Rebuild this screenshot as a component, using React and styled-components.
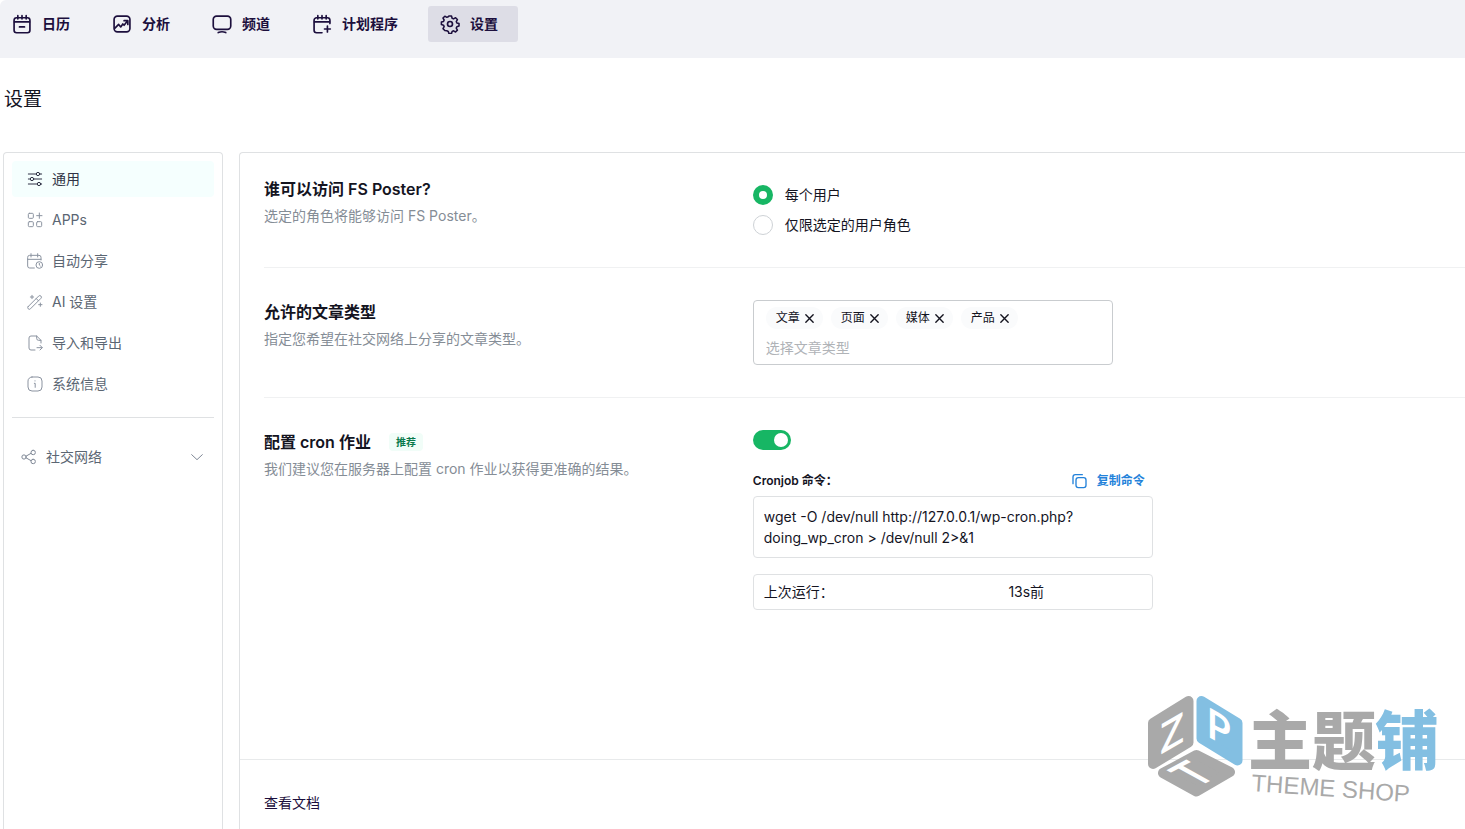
import { useState } from "react";
import styled, { createGlobalStyle, css } from "styled-components";

const navItems = [
  { name: "日历", icon: "calendar" },
  { name: "分析", icon: "chart" },
  { name: "频道", icon: "monitor" },
  { name: "计划程序", icon: "planner" },
  { name: "设置", icon: "gear" },
];

const menuItems = [
  { name: "通用", icon: "sliders" },
  { name: "APPs", icon: "apps" },
  { name: "自动分享", icon: "calendarClock" },
  { name: "AI 设置", icon: "wand" },
  { name: "导入和导出", icon: "fileExport" },
  { name: "系统信息", icon: "info" },
];

export default function App() {
  const [access, setAccess] = useState("all");
  const [types, setTypes] = useState(["文章", "页面", "媒体", "产品"]);
  const [cronActive, setCronActive] = useState(true);

  return (
    <>
      <GlobalStyle />
      <StyledPage>
        <StyledNav>
          {navItems.map(({ name, icon }) => (
            <StyledNavButton key={name} type="button" $active={name === "设置"}>
              <Icon name={icon} size={20} stroke={2} />
              {name}
            </StyledNavButton>
          ))}
        </StyledNav>
        <StyledPageTitle>设置</StyledPageTitle>
        <StyledLayout>
          <StyledSidebar>
            <StyledMenu>
              {menuItems.map(({ name, icon }) => (
                <StyledMenuLink key={name} href="#" $active={name === "通用"}>
                  <Icon name={icon} size={16} stroke={1.5} />
                  <span>{name}</span>
                </StyledMenuLink>
              ))}
            </StyledMenu>
            <StyledGroupButton type="button">
              <Icon name="share" size={16} stroke={1.5} />
              <span>社交网络</span>
              <Icon name="chevron" size={16} stroke={1.5} />
            </StyledGroupButton>
          </StyledSidebar>
          <StyledPanel>
            <StyledRows>
              <StyledRow $first>
                <div>
                  <StyledRowTitle>谁可以访问 FS Poster?</StyledRowTitle>
                  <StyledText>选定的角色将能够访问 FS Poster。</StyledText>
                </div>
                <StyledRadioGroup>
                  <StyledRadioLabel>
                    <StyledRadio
                      type="radio"
                      name="access"
                      checked={access === "all"}
                      onChange={() => setAccess("all")}
                    />
                    每个用户
                  </StyledRadioLabel>
                  <StyledRadioLabel>
                    <StyledRadio
                      type="radio"
                      name="access"
                      checked={access === "roles"}
                      onChange={() => setAccess("roles")}
                    />
                    仅限选定的用户角色
                  </StyledRadioLabel>
                </StyledRadioGroup>
              </StyledRow>
              <StyledRow>
                <div>
                  <StyledRowTitle>允许的文章类型</StyledRowTitle>
                  <StyledText>指定您希望在社交网络上分享的文章类型。</StyledText>
                </div>
                <StyledTagBox>
                  <StyledTags>
                    {types.map((type) => (
                      <StyledTag key={type}>
                        {type}
                        <StyledTagButton
                          type="button"
                          aria-label={type}
                          onClick={() =>
                            setTypes(types.filter((item) => item !== type))
                          }
                        >
                          <Icon name="close" size={11} stroke={3} />
                        </StyledTagButton>
                      </StyledTag>
                    ))}
                  </StyledTags>
                  <StyledTagInput
                    aria-label="选择文章类型"
                    placeholder="选择文章类型"
                  />
                </StyledTagBox>
              </StyledRow>
              <StyledRow>
                <div>
                  <StyledRowTitle>
                    配置 cron 作业
                    <StyledBadge>推荐</StyledBadge>
                  </StyledRowTitle>
                  <StyledText>
                    我们建议您在服务器上配置 cron 作业以获得更准确的结果。
                  </StyledText>
                </div>
                <StyledCron>
                  <StyledSwitch
                    type="checkbox"
                    role="switch"
                    aria-label="配置 cron 作业"
                    checked={cronActive}
                    onChange={() => setCronActive(!cronActive)}
                  />
                  <StyledCronHeader>
                    <StyledCronLabel>Cronjob 命令：</StyledCronLabel>
                    <StyledCopyButton type="button">
                      <Icon name="copy" size={16} stroke={2} />
                      复制命令
                    </StyledCopyButton>
                  </StyledCronHeader>
                  <StyledCommand>
                    wget -O /dev/null http://127.0.0.1/wp-cron.php?doing_wp_cron
                    &gt; /dev/null 2&gt;&amp;1
                  </StyledCommand>
                  <StyledLastRun>
                    <dt>上次运行：</dt>
                    <dd>13s前</dd>
                  </StyledLastRun>
                </StyledCron>
              </StyledRow>
            </StyledRows>
            <StyledFooter>
              <StyledFooterLink href="#">查看文档</StyledFooterLink>
            </StyledFooter>
          </StyledPanel>
        </StyledLayout>
        <ThemeShopLogo />
      </StyledPage>
    </>
  );
}

const icons = {
  calendar: (
    <>
      <rect x="2.500" y="4.500" width="19" height="18" rx="3" />
      <path d="M3 9.500h18M7 2v4M12 2v4M17 2v4M9 15.500h6" />
    </>
  ),
  chart: (
    <>
      <rect x="2.500" y="2.500" width="19" height="19" rx="4" />
      <path d="M3.500 17l4.500-4.500 2.500 3 2.500-3.500 1.500 1.500 4-5M14.500 8H19v4.500" />
    </>
  ),
  monitor: (
    <>
      <rect x="1.500" y="2.500" width="21" height="16" rx="4" />
      <path d="M7.500 22.300c3-1.300 6-1.300 9 0" />
    </>
  ),
  planner: (
    <>
      <path d="M21.500 11.500V7.500a3 3 0 0 0-3-3h-13a3 3 0 0 0-3 3v12a3 3 0 0 0 3 3H12" />
      <path d="M3 9.500h18M7 2v4M12 2v4M17 2v4M18.500 14.500v7M15 18h7" />
    </>
  ),
  gear: (
    <>
      <circle cx="12" cy="12" r="3" />
      <path d="M10.300 2.200h3.400l.8 2.900 1.900.8 2.600-1.500 2.400 2.400-1.500 2.600.8 1.900 2.800.8v3.200l-2.800.8-.8 1.900 1.500 2.600-2.400 2.400-2.600-1.500-1.900.8-.8 2.800h-3.400l-.8-2.800-1.900-.8L5 21l-2.400-2.400L4.100 16l-.8-1.900-2.800-.8v-3.200l2.800-.8.8-1.900-1.500-2.600L5 2.400l2.600 1.500 1.900-.8z" transform="translate(1.200 .4) scale(.92)" />
    </>
  ),
  sliders: (
    <>
      <path d="M2 4.500h12M19 4.500h3M2 12h3M10 12h12M2 19.500h14M20.500 19.500h1.500" />
      <circle cx="16.500" cy="4.500" r="2.500" />
      <circle cx="7.500" cy="12" r="2.500" />
      <circle cx="18" cy="19.500" r="2.500" />
    </>
  ),
  apps: (
    <>
      <rect x="2" y="2" width="7.500" height="7.500" rx="1.500" />
      <rect x="2" y="14.500" width="7.500" height="7.500" rx="1.500" />
      <rect x="14.500" y="14.500" width="7.500" height="7.500" rx="1.500" />
      <path d="M18.500 1.500v8M14.500 5.500h8" />
    </>
  ),
  calendarClock: (
    <>
      <path d="M21 10.500V6.500a3 3 0 0 0-3-3H4a3 3 0 0 0-3 3v13a3 3 0 0 0 3 3h7" />
      <path d="M1 9.500h20M6 1v5M16 1v5" />
      <circle cx="18.500" cy="18" r="5" />
      <path d="M18.500 15.500V18l1.500 1.500" />
    </>
  ),
  wand: (
    <>
      <path d="M1.800 18.800L17.500 3.100a2.400 2.400 0 0 1 3.400 3.400L5.200 22.200a2.400 2.400 0 0 1-3.400-3.400zM13.800 6.800l3.400 3.400" />
      <path d="M7.500 2v5M5 4.500h5M20 13.500v5M17.500 16h5" />
    </>
  ),
  fileExport: (
    <>
      <path d="M21 12V8l-6.500-6.500H6a3 3 0 0 0-3 3v15a3 3 0 0 0 3 3h6M14.500 1.500V5a3 3 0 0 0 3 3H21" />
      <path d="M15 19h7.500M19.500 15.500L23 19l-3.500 3.500" />
    </>
  ),
  info: (
    <>
      <rect x="1.500" y="1.500" width="21" height="21" rx="6" />
      <path d="M11 11h1.300v6M12 7.200v.3" />
    </>
  ),
  share: (
    <>
      <circle cx="4.500" cy="12" r="3.200" />
      <rect x="15" y="2" width="6.500" height="6.500" rx="3" />
      <rect x="15" y="15.500" width="6.500" height="6.500" rx="3" />
      <path d="M8 10.500l7-4M8 13.500l7 4" />
    </>
  ),
  chevron: <path d="M4 8.500l8 7.500 8-7.500" />,
  close: <path d="M4 4l16 16M20 4L4 20" />,
  copy: (
    <>
      <rect x="7.500" y="7" width="15" height="15" rx="3.500" />
      <path d="M3 16V6a3.500 3.500 0 0 1 3.500-3.500H17" />
    </>
  ),
};

function Icon({ name, size, stroke }) {
  return (
    <StyledIcon
      width={size}
      height={size}
      viewBox="0 0 24 24"
      strokeWidth={stroke}
      aria-hidden="true"
    >
      {icons[name]}
    </StyledIcon>
  );
}

function ThemeShopLogo() {
  return (
    <StyledLogo viewBox="0 0 300 130" width="300" height="130">
      <g strokeWidth="10" strokeLinejoin="round">
        <path
          d="M43.500 11L8 33v41l35.500-21.500z"
          fill="#a9a9a9"
          stroke="#a9a9a9"
        />
        <path
          d="M56.500 11L92.500 33v37.500l-36-22z"
          fill="#83bfe2"
          stroke="#83bfe2"
        />
        <path
          d="M51.500 65L85 82 51.500 101.500 18 83z"
          fill="#a9a9a9"
          stroke="#a9a9a9"
        />
      </g>
      <StyledLogoLetter transform="translate(27 42) skewY(-30)" y="16">
        Z
      </StyledLogoLetter>
      <StyledLogoLetter transform="translate(74 37) skewY(30)" y="16">
        P
      </StyledLogoLetter>
      <StyledLogoLetter transform="translate(48 84) rotate(-28) skewX(33)" y="14">
        T
      </StyledLogoLetter>
      <StyledLogoName x="103" y="74">
        主题
      </StyledLogoName>
      <StyledLogoName x="230" y="74" $blue>
        铺
      </StyledLogoName>
      <StyledLogoCaption transform="translate(106 101) rotate(4)">
        THEME SHOP
      </StyledLogoCaption>
    </StyledLogo>
  );
}

const GlobalStyle = createGlobalStyle`
  *, *::before, *::after {
    box-sizing: border-box;
  }
  body {
    margin: 0;
    background: #fff;
    color: #14141f;
    font-family: Inter, "Noto Sans CJK SC", sans-serif;
    font-size: 14px;
    line-height: 22px;
  }
  button, input {
    font: inherit;
    color: inherit;
  }
  h1, h2, p, dl, dd {
    margin: 0;
  }
`;

const StyledPage = styled.div`
  position: relative;
  min-height: 100vh;
  display: flex;
  flex-direction: column;
`;

const StyledIcon = styled.svg`
  flex-shrink: 0;
  fill: none;
  stroke: currentColor;
  stroke-linecap: round;
  stroke-linejoin: round;
`;

const StyledNav = styled.nav`
  display: flex;
  gap: 10px;
  padding: 6px 0 16px;
  background: #f1f2f6;
  border-top-left-radius: 6px;
`;

const StyledNavButton = styled.button`
  display: flex;
  align-items: center;
  gap: 10px;
  height: 36px;
  padding: 0 20px 0 12px;
  border: none;
  border-radius: 3px;
  background: ${({ $active }) => ($active ? "#dddde6" : "transparent")};
  color: #1c0f3d;
  font-weight: 600;
`;

const StyledPageTitle = styled.h1`
  padding: 27px 4px 37px;
  font-size: 19px;
  font-weight: 400;
  line-height: 30px;
`;

const StyledLayout = styled.div`
  flex: 1;
  display: flex;
  gap: 16px;
  padding-left: 3px;
`;

const StyledSidebar = styled.aside`
  flex: 0 0 220px;
  padding: 8px;
  border: 1px solid #dfe1e3;
  border-bottom: none;
  border-radius: 4px 4px 0 0;
  color: #5b6673;
`;

const StyledMenu = styled.nav`
  display: flex;
  flex-direction: column;
  gap: 5px;
  padding-bottom: 15px;
  border-bottom: 1px solid #dfe1e3;
`;

const StyledMenuLink = styled.a`
  display: flex;
  align-items: center;
  gap: 9px;
  height: 36px;
  padding: 0 15px;
  border-radius: 4px;
  color: inherit;
  text-decoration: none;
  svg {
    color: #8b93a0;
  }
  ${({ $active }) =>
    $active &&
    css`
      background: #f5fffe;
      color: #303346;
      svg {
        color: #303346;
      }
    `}
`;

const StyledGroupButton = styled.button`
  display: flex;
  align-items: center;
  gap: 9px;
  width: 100%;
  height: 36px;
  margin-top: 21px;
  padding: 0 9px;
  border: none;
  background: transparent;
  span {
    flex: 1;
    text-align: left;
  }
  svg {
    color: #7f8896;
  }
`;

const StyledPanel = styled.main`
  flex: 1;
  display: flex;
  flex-direction: column;
  border: 1px solid #dfe1e3;
  border-width: 1px 0 0 1px;
  border-top-left-radius: 4px;
`;

const StyledRows = styled.div`
  flex: 1;
  padding-left: 24px;
`;

const StyledRow = styled.section`
  display: grid;
  grid-template-columns: 2fr 3fr;
  gap: 14px;
  padding: ${({ $first }) => ($first ? "24px" : "32px")} 0 32px;
  &:not(:last-child) {
    border-bottom: 1px solid #f0f1f2;
  }
`;

const StyledRowTitle = styled.h2`
  display: flex;
  align-items: center;
  gap: 18px;
  margin-bottom: 4px;
  font-size: 16px;
  font-weight: 600;
  line-height: 24px;
`;

const StyledBadge = styled.span`
  padding: 0 7px;
  border-radius: 4px;
  background: #f1fdf8;
  color: #08794b;
  font-size: 10px;
  font-weight: 700;
  line-height: 18px;
`;

const StyledText = styled.p`
  color: #858d96;
`;

const StyledRadioGroup = styled.div`
  display: flex;
  flex-direction: column;
  gap: 10px;
  padding-top: 8px;
`;

const StyledRadioLabel = styled.label`
  display: flex;
  align-items: center;
  gap: 12px;
  line-height: 20px;
`;

const StyledRadio = styled.input`
  appearance: none;
  width: 20px;
  height: 20px;
  margin: 0;
  border: 1px solid #ced2d6;
  border-radius: 50%;
  background: #fff;
  &:checked {
    border: 6px solid #17b664;
  }
`;

const StyledTagBox = styled.div`
  max-width: 360px;
  padding: 6px 12px 5px;
  border: 1px solid #c9cccf;
  border-radius: 4px;
`;

const StyledTags = styled.div`
  display: flex;
  gap: 8px;
  margin-bottom: 8px;
`;

const StyledTag = styled.span`
  display: flex;
  align-items: center;
  gap: 4px;
  padding: 0 8px 0 10px;
  border-radius: 11px;
  background: #fafbfc;
  font-size: 12px;
`;

const StyledTagButton = styled.button`
  display: flex;
  padding: 0;
  border: none;
  background: transparent;
`;

const StyledTagInput = styled.input`
  display: block;
  width: 100%;
  height: 22px;
  padding: 0;
  border: none;
  outline: none;
  background: transparent;
  &::placeholder {
    color: #b0b3b7;
  }
`;

const StyledCron = styled.div`
  max-width: 400px;
`;

const StyledSwitch = styled.input`
  appearance: none;
  display: flex;
  align-items: center;
  width: 38px;
  height: 20px;
  margin: 0;
  padding: 0 3px;
  border-radius: 10px;
  background: ${({ checked }) => (checked ? "#17b664" : "#ced2d6")};
  &::before {
    content: "";
    width: 14px;
    height: 14px;
    margin-left: ${({ checked }) => (checked ? "auto" : "0")};
    border-radius: 50%;
    background: #fff;
  }
`;

const StyledCronHeader = styled.div`
  display: flex;
  justify-content: space-between;
  margin: 20px 0 4px;
  padding-right: 8px;
  font-size: 12px;
`;

const StyledCronLabel = styled.span`
  font-weight: 600;
`;

const StyledCopyButton = styled.button`
  display: flex;
  align-items: center;
  gap: 10px;
  padding: 0;
  border: none;
  background: transparent;
  color: #2382da;
  font-weight: 600;
`;

const StyledCommand = styled.p`
  margin-bottom: 16px;
  padding: 9px 10px;
  border: 1px solid #dfe1e3;
  border-radius: 4px;
  line-height: 21px;
`;

const StyledLastRun = styled.dl`
  display: grid;
  grid-template-columns: 11fr 6fr;
  padding: 6px 10px;
  border: 1px solid #dfe1e3;
  border-radius: 4px;
`;

const StyledFooter = styled.footer`
  padding: 32px 24px 15px;
  border-top: 1px solid #e8eaeb;
`;

const StyledFooterLink = styled.a`
  color: #1c0f3d;
  text-decoration: none;
`;

const StyledLogo = styled.svg`
  position: absolute;
  right: 20px;
  bottom: 9px;
  overflow: visible;
  pointer-events: none;
`;

const StyledLogoLetter = styled.text`
  fill: #fff;
  font-family: "Open Sans", sans-serif;
  font-size: 42px;
  font-weight: 600;
  text-anchor: middle;
`;

const StyledLogoName = styled.text`
  fill: ${({ $blue }) => ($blue ? "#83bfe2" : "#a9a9a9")};
  font-family: "Noto Sans CJK SC", sans-serif;
  font-size: 64px;
  font-weight: 900;
`;

const StyledLogoCaption = styled.text`
  fill: #a9a9a9;
  font-family: "Liberation Sans", sans-serif;
  font-size: 24px;
`;
